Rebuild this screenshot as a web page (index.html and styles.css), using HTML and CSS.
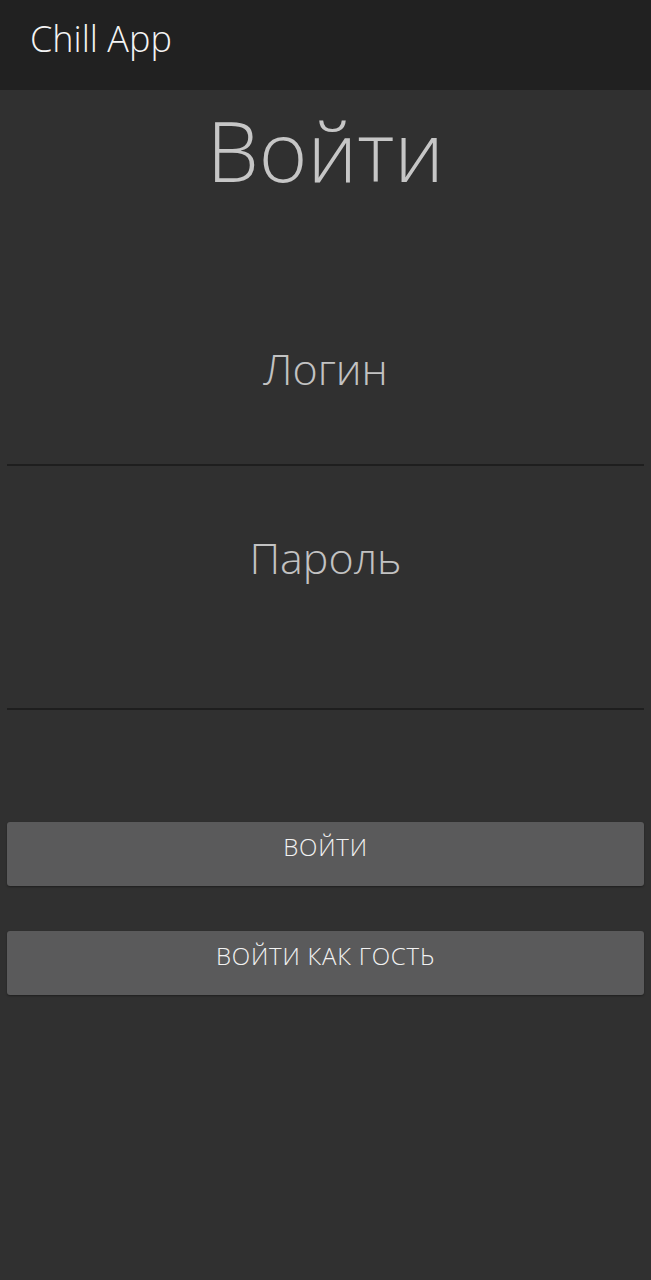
FILE: index.html
```html
<!DOCTYPE html>
<html lang="ru">
<head>
<meta charset="utf-8">
<title>Chill App</title>
<link rel="stylesheet" href="styles.css">
</head>
<body>
<header class="appbar">Chill App</header>
<main class="content">
  <h1 class="title">Войти</h1>
  <div class="field field-login"><span class="placeholder">Логин</span></div>
  <div class="field field-pass"><span class="placeholder">Пароль</span></div>
  <button class="btn btn-login">ВОЙТИ</button>
  <button class="btn btn-guest">ВОЙТИ КАК ГОСТЬ</button>
</main>
</body>
</html>
```
FILE: styles.css
```css
html, body {
  margin: 0;
  padding: 0;
  height: 100%;
}
body {
  background: #303030;
  font-family: "Open Sans", "Noto Sans", sans-serif;
  font-weight: 300;
}
.appbar {
  height: 90px;
  box-sizing: border-box;
  background: #212121;
  color: #f4f4f4;
  font-size: 36px;
  line-height: 48px;
  padding: 15px 0 0 30px;
}
.content {
  padding: 0 7px;
  display: flex;
  flex-direction: column;
}
.title {
  margin: 5px 0 0;
  font-size: 83px;
  font-weight: 300;
  line-height: 110px;
  color: #c6c6c6;
  text-align: center;
}
.field {
  border-bottom: 2px solid #1e1e1e;
  text-align: center;
}
.field-login {
  padding: 134px 0 65px;
}
.field-pass {
  padding: 62px 0 120px;
}
.placeholder {
  display: block;
  font-size: 43px;
  line-height: 60px;
  color: #c2c2c2;
}
.btn {
  display: block;
  width: 100%;
  height: 64px;
  box-sizing: border-box;
  border: none;
  border-radius: 3px;
  background: #5a5a5b;
  box-shadow: 0 1px 2px rgba(0,0,0,0.35);
  color: #f2f2f2;
  font-family: inherit;
  font-weight: 300;
  font-size: 24px;
  letter-spacing: 0.8px;
  line-height: 28px;
  padding: 11px 0 25px;
  text-align: center;
}
.btn-login {
  margin-top: 112px;
}
.btn-guest {
  margin-top: 45px;
}
```
